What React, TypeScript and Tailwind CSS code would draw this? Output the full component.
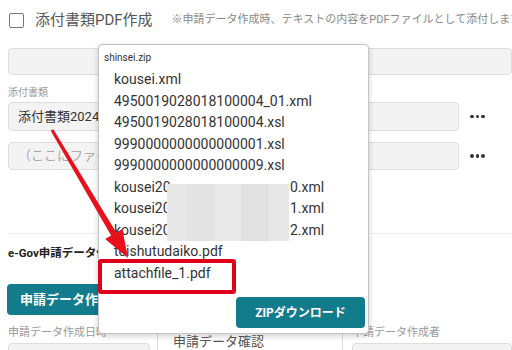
import React from "react";

const files = [
  "kousei.xml",
  "4950019028018100004_01.xml",
  "4950019028018100004.xsl",
  "9990000000000000001.xsl",
  "9990000000000000009.xsl",
];

function Dots() {
  return (
    <div className="ml-[11px] flex gap-[2px]">
      <span className="w-[3.5px] h-[3.5px] rounded-full bg-[#333]" />
      <span className="w-[3.5px] h-[3.5px] rounded-full bg-[#333]" />
      <span className="w-[3.5px] h-[3.5px] rounded-full bg-[#333]" />
    </div>
  );
}

export default function App() {
  return (
    <div className="relative w-[512px] h-[350px] overflow-hidden bg-white font-[Roboto,'Noto_Sans_CJK_JP',sans-serif]">
      {/* form behind the popup */}
      <div className="flex items-center h-[40px] whitespace-nowrap">
        <div className="shrink-0 ml-[9px] w-[15px] h-[15px] border-[1.5px] border-[#777] rounded-[2px]" />
        <span className="shrink-0 ml-[11px] text-[15px] text-[#555]">添付書類PDF作成</span>
        <span className="shrink-0 ml-[19px] text-[11px] text-[#888]">
          ※申請データ作成時、テキストの内容をPDFファイルとして添付します
        </span>
      </div>
      <div className="mt-[8px] ml-[8px] h-[27px] bg-[#f3f3f3] border border-[#ddd] rounded-[4px]" />
      <div className="mt-[12px] ml-[8px] h-[12px] text-[10px] leading-[12px] text-[#999]">添付書類</div>
      <div className="mt-[3px] ml-[8px] flex items-center">
        <div className="w-[451px] h-[29px] flex items-center pl-[9px] bg-[#f3f3f3] border border-[#ddd] rounded-[4px] text-[13px] text-[#333]">
          添付書類20240101.pdf
        </div>
        <Dots />
      </div>
      <div className="mt-[11px] ml-[8px] flex items-center">
        <div className="w-[451px] h-[28px] flex items-center pl-[9px] bg-[#f3f3f3] border border-[#ddd] rounded-[4px] text-[13px] text-[#aaa]">
          （ここにファイルをドロップ）
        </div>
        <Dots />
      </div>
      <div className="mt-[63px] ml-[8px] h-px bg-[#eee]" />
      <div className="mt-[13px] ml-[8px] h-[12px] text-[11.5px] leading-[12px] font-bold text-[#222]">
        e-Gov申請データ作成
      </div>
      <div className="mt-[25px] ml-[7px] w-[130px] h-[31px] flex items-center pl-[13px] bg-[#127b8c] rounded-[4px] text-[13px] font-bold text-white">
        申請データ作成
      </div>
      <div className="flex">
        <div className="ml-[8px] w-[142px]">
          <div className="mt-[12px] h-[12px] text-[11px] leading-[12px] text-[#999] whitespace-nowrap">申請データ作成日時</div>
          <div className="mt-[4px] h-[30px] bg-[#f3f3f3] border border-[#ddd] rounded-[4px]" />
        </div>
        <div className="ml-[7px] mt-[15px] w-[186px] h-[32px] pl-[15px] pt-[2px] bg-white border border-[#ddd] rounded-[4px] text-[13px] leading-[18px] text-[#555]">
          申請データ確認
        </div>
        <div className="ml-[9px] flex-1">
          <div className="mt-[12px] h-[12px] text-[11px] leading-[12px] text-[#999] whitespace-nowrap">申請データ作成者</div>
          <div className="mt-[4px] h-[30px] bg-[#f3f3f3] border border-[#ddd] rounded-[4px]" />
        </div>
      </div>

      {/* zip contents popup */}
      <div className="absolute left-[98px] top-[44px] w-[271px] h-[290px] bg-white border border-[#c4c4c4] rounded-[4px] shadow-[0_2px_6px_rgba(0,0,0,0.18)]">
        <div className="pt-[6px] pl-[5px] h-[20px] text-[10px] leading-[14px] text-[#333]">shinsei.zip</div>
        <div className="mt-[4px] pl-[15px] text-[14px] leading-[21.5px] text-[#333] whitespace-nowrap">
          {files.map((f) => (
            <div key={f}>{f}</div>
          ))}
          {["0.xml", "1.xml", "2.xml"].map((s) => (
            <div key={s}>
              <span className="inline-block w-[176px]">kousei20</span>
              {s}
            </div>
          ))}
          <div>teishutudaiko.pdf</div>
          <div>attachfile_1.pdf</div>
        </div>
        <div className="mt-[13px] pr-[3px] flex justify-end">
          <div className="w-[129px] h-[31px] flex items-center justify-center bg-[#127b8c] rounded-[4px] text-[12px] font-bold text-white">
            ZIPダウンロード
          </div>
        </div>
        {/* masked file names */}
        <div className="absolute left-[68px] top-[139px] w-[122px] h-[57px] flex">
          <div className="w-[20px] bg-[#e8e8e8]" />
          <div className="w-[28px] bg-[#e3e3e3]" />
          <div className="w-[26px] bg-[#e9e9e9]" />
          <div className="w-[28px] bg-[#e1e1e1]" />
          <div className="w-[20px] bg-[#e7e7e7]" />
        </div>
      </div>

      {/* highlight box */}
      <div className="absolute left-[98px] top-[259px] w-[138px] h-[35px] border-[4px] border-[#e0001b] rounded-[3px]" />

      {/* arrow */}
      <svg className="absolute inset-0 pointer-events-none" width="512" height="350" viewBox="0 0 512 350">
        <polygon
          points="53.3,129.2 50.7,130.8 111.1,235.5 105.1,239.1 128,258 122.3,228.9 116.3,232.5"
          fill="#e8101b"
        />
      </svg>
    </div>
  );
}
